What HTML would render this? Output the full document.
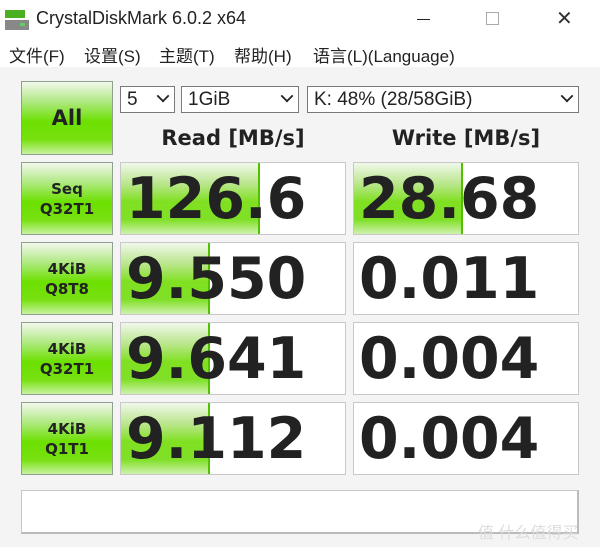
<!DOCTYPE html><html><head><meta charset="utf-8"><style>
*{margin:0;padding:0;box-sizing:border-box}
body{width:600px;height:547px;overflow:hidden;background:#f4f4f4;font-family:"Liberation Sans","Noto Sans CJK SC",sans-serif;position:relative;color:#222}
.a{position:absolute}
.title{left:0;top:0;width:600px;height:37px;background:#fff}
.menu{left:0;top:37px;width:600px;height:30px;background:#fff;font-size:17px}
.btn{position:absolute;left:21px;width:92px;border:1px solid #8fa08f;background:linear-gradient(#f2f8ec 0%,#b5ea8c 25%,#6ce000 55%,#78e010 80%,#c8f2a0 100%);font-weight:bold;text-align:center;color:#222;display:flex;align-items:center;justify-content:center;flex-direction:column;font-size:15px;line-height:20px;font-family:"DejaVu Sans",sans-serif}
.cell{position:absolute;height:73px;border:1px solid #c8c8c8;background:#fff;overflow:hidden}
.bar{position:absolute;left:0;top:0;bottom:0;background:linear-gradient(#f0f8ea 0%,#b8e68a 30%,#80e020 55%,#80e028 80%,#d0f2b0 100%);border-right:2px solid #50c000}
.num{position:absolute;left:5px;top:0px;font-family:"DejaVu Sans",sans-serif;font-size:57px;font-weight:bold;color:#222;line-height:72px}
.sel{position:absolute;top:86px;height:27px;border:1px solid #7a7a7a;background:#fff;font-size:19px;line-height:25px;padding-left:6px}
.chev{position:absolute;right:6px;top:8px;width:10px;height:10px;border-right:2px solid #222;border-bottom:2px solid #222;transform:rotate(45deg) scale(0.9);top:4px}
.hd{position:absolute;top:126px;font-size:21px;font-weight:bold;text-align:center;width:226px;font-family:"DejaVu Sans",sans-serif}
</style></head><body>
<div class="a title">
<svg class="a" style="left:5px;top:10px" width="24" height="20"><rect x="0" y="0" width="20" height="8" fill="#4ab020"/><rect x="0" y="10" width="24" height="10" fill="#888"/><rect x="15" y="13" width="5" height="3" fill="#6c6"/></svg>
<div class="a" style="left:36px;top:8px;font-size:18px">CrystalDiskMark 6.0.2 x64</div>
<div class="a" style="left:417px;top:19px;width:13px;height:1px;background:#222"></div>
<div class="a" style="left:486px;top:12px;width:13px;height:13px;border:1px solid #aaa"></div>
<div class="a" style="left:556px;top:6px;font-size:20px;color:#333">✕</div>
</div>
<div class="a menu">
<span class="a" style="left:9px;top:5px">文件(F)</span>
<span class="a" style="left:84px;top:5px">设置(S)</span>
<span class="a" style="left:159px;top:5px">主题(T)</span>
<span class="a" style="left:234px;top:5px">帮助(H)</span>
<span class="a" style="left:313px;top:5px">语言(L)(Language)</span>
</div>
<div class="btn" style="top:81px;height:74px;font-size:21px">All</div>
<div class="sel" style="left:120px;width:55px">5<span class="chev"></span></div>
<div class="sel" style="left:181px;width:118px">1GiB<span class="chev"></span></div>
<div class="sel" style="left:307px;width:272px">K: 48% (28/58GiB)<span class="chev"></span></div>
<div class="hd" style="left:120px">Read [MB/s]</div>
<div class="hd" style="left:353px">Write [MB/s]</div>

<div class="btn" style="top:162px;height:73px">Seq<br>Q32T1</div>
<div class="cell" style="left:120px;top:162px;width:226px"><div class="bar" style="width:139px"></div><div class="num">126.6</div></div>
<div class="cell" style="left:353px;top:162px;width:226px"><div class="bar" style="width:109px"></div><div class="num">28.68</div></div>

<div class="btn" style="top:242px;height:73px">4KiB<br>Q8T8</div>
<div class="cell" style="left:120px;top:242px;width:226px"><div class="bar" style="width:89px"></div><div class="num">9.550</div></div>
<div class="cell" style="left:353px;top:242px;width:226px"><div class="num">0.011</div></div>

<div class="btn" style="top:322px;height:73px">4KiB<br>Q32T1</div>
<div class="cell" style="left:120px;top:322px;width:226px"><div class="bar" style="width:89px"></div><div class="num">9.641</div></div>
<div class="cell" style="left:353px;top:322px;width:226px"><div class="num">0.004</div></div>

<div class="btn" style="top:402px;height:73px">4KiB<br>Q1T1</div>
<div class="cell" style="left:120px;top:402px;width:226px"><div class="bar" style="width:89px"></div><div class="num">9.112</div></div>
<div class="cell" style="left:353px;top:402px;width:226px"><div class="num">0.004</div></div>

<div class="a" style="left:21px;top:490px;width:558px;height:44px;background:#fff;border:1px solid #c8c8c8;border-right:2px solid #bbb;border-bottom:2px solid #bbb"></div>
<div class="a" style="left:478px;top:519px;font-size:16px;color:#ddd">值 什么值得买</div>
</body></html>
